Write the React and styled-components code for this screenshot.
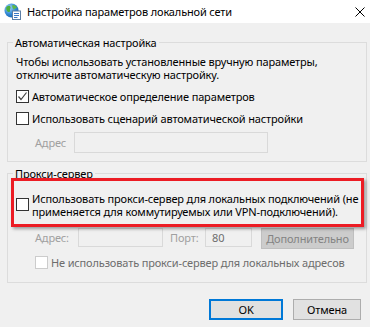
import React from 'react';
import styled, { createGlobalStyle } from 'styled-components';

const Global = createGlobalStyle`
  html, body { margin: 0; padding: 0; background: #f0f0f0; }
  body {
    font-family: "Noto Sans", "Segoe UI", sans-serif;
    font-size: 11px;
    letter-spacing: -0.15px;
    color: #000;
    white-space: nowrap;
  }
  * { box-sizing: border-box; }
`;

const Window = styled.div`
  width: 370px;
  height: 327px;
  display: flex;
  flex-direction: column;
  background: #f0f0f0;
  overflow: hidden;
`;

const TitleBar = styled.div`
  height: 23px;
  background: #fff;
  display: flex;
  align-items: center;
  padding: 0 5px 0 4px;
  gap: 6px;
`;

const TitleText = styled.div`
  flex: 1;
  line-height: 16px;
  color: #000;
`;

const Body = styled.div`
  flex: 1;
  display: flex;
  flex-direction: column;
  padding: 11px 3px 0 7px;
`;

const Group = styled.fieldset`
  margin: ${p => p.$mt || 0}px 0 0 0;
  border: 1px solid #dcdcdc;
  padding: 0 8px ${p => p.$pb || 8}px 8px;
  min-width: 0;
  display: flex;
  flex-direction: column;
`;

const Legend = styled.legend`
  margin-left: -3px;
  padding: 2px 2px 0 2px;
  line-height: 14px;
`;

const Desc = styled.div`
  margin-top: 5px;
  line-height: 13px;
`;

const CheckRow = styled.label`
  display: flex;
  align-items: center;
  gap: 3px;
  height: 16px;
  margin-top: ${p => p.$mt || 0}px;
  margin-left: ${p => p.$indent || 0}px;
  color: ${p => (p.$disabled ? '#6d6d6d' : '#000')};
  line-height: 13px;
`;

const Box = styled.span`
  width: 13px;
  height: 13px;
  flex: none;
  background: #fff;
  border: 1px solid ${p => (p.$disabled ? '#cccccc' : '#333333')};
  display: flex;
  align-items: center;
  justify-content: center;
`;

const FieldRow = styled.div`
  display: flex;
  align-items: flex-start;
  margin-top: ${p => p.$mt || 0}px;
`;

const FieldLabel = styled.span`
  color: #a0a0a0;
  width: ${p => p.$w}px;
  margin-left: ${p => p.$ml || 0}px;
  line-height: ${p => p.$h}px;
  flex: none;
`;

const TextBox = styled.div`
  width: ${p => p.$w}px;
  height: ${p => p.$h}px;
  flex: none;
  border: 1px solid #d9d9d9;
  background: #f0f0f0;
  color: #6d6d6d;
  padding-left: 6px;
  line-height: ${p => p.$h - 2}px;
  margin-right: ${p => p.$mr || 0}px;
`;

const DisabledButton = styled.div`
  width: 93px;
  height: 21px;
  flex: none;
  background: #cccccc;
  border: 1px solid #bfbfbf;
  color: #838383;
  text-align: center;
  line-height: 19px;
`;

const Highlight = styled.div`
  margin: -3px -6px 0 -5px;
  height: 49px;
  border: 3px solid #ec1c24;
  box-shadow: 2px 2px 3px rgba(0, 0, 0, 0.35);
  padding: 11px 0 0 2px;
  display: flex;
  align-items: flex-start;
  gap: 3px;
  position: relative;
`;

const HighlightBox = styled(Box)`
  margin-top: 6px;
`;

const HighlightText = styled.div`
  line-height: 13px;
`;

const Footer = styled.div`
  display: flex;
  justify-content: flex-end;
  gap: 10px;
  margin-top: 16px;
  padding-right: 6px;
`;

const Button = styled.div`
  width: ${p => p.$w}px;
  height: 21px;
  background: #e1e1e1;
  border: ${p => (p.$default ? '2px solid #0078d7' : '1px solid #adadad')};
  display: flex;
  align-items: center;
  justify-content: center;
  color: #000;
`;

const AppIcon = () => (
  <svg width="17" height="17" viewBox="0 0 17 17">
    <defs>
      <radialGradient id="g" cx="0.35" cy="0.3" r="0.8">
        <stop offset="0" stopColor="#9fd3f7" />
        <stop offset="0.6" stopColor="#2f86d2" />
        <stop offset="1" stopColor="#1a5ea8" />
      </radialGradient>
    </defs>
    <circle cx="7.5" cy="7.5" r="7" fill="url(#g)" />
    <path d="M3 3.5c1.5-1 3-1 3.5 0.5s-1 2-0.5 3.5-1.5 2-2.5 1S1.5 4.5 3 3.5z" fill="#4caf3c" />
    <path d="M9 2c1.5 0 3.5 1.2 4 3-1 0.5-2 0-2.5 1S9 6 8.5 4.5 8 2 9 2z" fill="#5cb84a" />
    <rect x="8.5" y="8" width="8" height="8.5" fill="#fff" stroke="#5d7fa6" strokeWidth="1" />
    <path d="M10 10.5h5M10 12.5h5M10 14.5h3.5" stroke="#3b78c4" strokeWidth="1" />
  </svg>
);

const CloseIcon = () => (
  <svg width="10" height="10" viewBox="0 0 10 10">
    <path d="M0.5 0.5L9.5 9.5M9.5 0.5L0.5 9.5" stroke="#000" strokeWidth="1" />
  </svg>
);

const Check = () => (
  <svg width="11" height="11" viewBox="0 0 11 11">
    <path d="M1.5 5.5L4 8.5L9.5 1.5" fill="none" stroke="#444" strokeWidth="1.2" />
  </svg>
);

export default function App() {
  return (
    <Window>
      <Global />
      <TitleBar>
        <AppIcon />
        <TitleText>Настройка параметров локальной сети</TitleText>
        <CloseIcon />
      </TitleBar>
      <Body>
        <Group>
          <Legend>Автоматическая настройка</Legend>
          <Desc>
            Чтобы использовать установленные вручную параметры,
            <br />
            отключите автоматическую настройку.
          </Desc>
          <CheckRow $mt={7}>
            <Box><Check /></Box>
            Автоматическое определение параметров
          </CheckRow>
          <CheckRow $mt={6}>
            <Box />
            Использовать сценарий автоматической настройки
          </CheckRow>
          <FieldRow $mt={6}>
            <FieldLabel $ml={19} $w={39} $h={21}>Адрес</FieldLabel>
            <TextBox $w={194} $h={21} />
          </FieldRow>
        </Group>
        <Group $mt={3} $pb={12}>
          <Legend>Прокси-сервер</Legend>
          <Highlight>
            <HighlightBox />
            <HighlightText>
              Использовать прокси-сервер для локальных подключений (не
              <br />
              применяется для коммутируемых или VPN-подключений).
            </HighlightText>
          </Highlight>
          <FieldRow $mt={1}>
            <FieldLabel $ml={19} $w={43} $h={19}>Адрес:</FieldLabel>
            <TextBox $w={85} $h={19} $mr={7} />
            <FieldLabel $w={35} $h={19}>Порт:</FieldLabel>
            <TextBox $w={47} $h={19} $mr={9}>80</TextBox>
            <DisabledButton>Дополнительно</DisabledButton>
          </FieldRow>
          <CheckRow $mt={5} $indent={19} $disabled>
            <Box $disabled />
            Не использовать прокси-сервер для локальных адресов
          </CheckRow>
        </Group>
        <Footer>
          <Button $w={74} $default>OK</Button>
          <Button $w={68}>Отмена</Button>
        </Footer>
      </Body>
    </Window>
  );
}
